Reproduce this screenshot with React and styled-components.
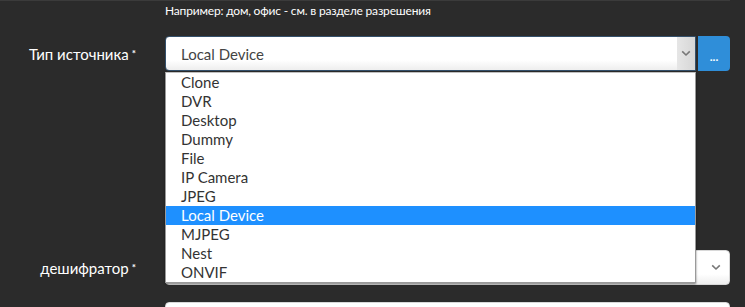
import React from "react";
import styled, { createGlobalStyle } from "styled-components";

const GlobalStyle = createGlobalStyle`
  html, body { margin: 0; padding: 0; background: #2b2b2b; }
  body { font-family: Lato, "Noto Sans", sans-serif; }
`;

const Page = styled.div`
  width: 745px;
  height: 307px;
  overflow: hidden;
  background: #2b2b2b;
  color: #f2f2f2;
`;

const TopRule = styled.div`
  width: 730px;
  border-top: 1px solid #3b3b3b;
`;

const Hint = styled.div`
  padding-left: 165px;
  height: 21px;
  line-height: 20px;
  font-size: 12px;
  font-weight: 400;
  letter-spacing: -0.18px;
  color: #ffffff;
`;

const FormRow = styled.div`
  display: flex;
  align-items: center;
  width: 730px;
  height: 35px;
  margin-top: ${(p) => p.$gap || 0}px;
`;

const Label = styled.label`
  width: 165px;
  box-sizing: border-box;
  padding-right: 29px;
  text-align: right;
  font-size: 15px;
  color: #ffffff;
  white-space: nowrap;
`;

const Star = styled.span`
  font-size: 10px;
  font-weight: 700;
  vertical-align: 3px;
  margin-left: 3px;
`;

const Field = styled.div`
  flex: 1;
  display: flex;
  position: relative;
  height: 100%;
`;

const SelectBox = styled.div`
  flex: ${(p) => (p.$width ? `0 0 ${p.$width}px` : "1")};
  box-sizing: border-box;
  display: flex;
  align-items: stretch;
  height: 100%;
  background: linear-gradient(#ffffff 70%, #eeeeee);
  border: 1px solid ${(p) => (p.$focus ? "#34506b" : "#d8d8d8")};
  border-radius: ${(p) => (p.$joined ? "4px 0 0 4px" : "4px")};
  overflow: hidden;
`;

const Value = styled.div`
  flex: 1;
  padding-left: 15px;
  display: flex;
  align-items: center;
  font-size: 15px;
  color: #444;
`;

const Arrow = styled.div`
  width: 18px;
  display: flex;
  align-items: center;
  justify-content: center;
  background: ${(p) => (p.$shaded ? "linear-gradient(90deg, #e6e6e6, #d6d6d6)" : "transparent")};
  padding-right: ${(p) => (p.$shaded ? 0 : 4)}px;
`;

const DotsButton = styled.button`
  width: 32px;
  margin-left: 2px;
  height: 100%;
  border: none;
  border-radius: 0 4px 4px 0;
  background: #2f8ed9;
  color: #fff;
  font-family: Lato, sans-serif;
  font-weight: 700;
  font-size: 12px;
  padding: 5px 0 0;
  cursor: pointer;
`;

const Dropdown = styled.ul`
  position: absolute;
  top: 36px;
  left: 0;
  width: 531px;
  box-sizing: border-box;
  margin: 0;
  padding: 0;
  list-style: none;
  background: #fff;
  border: 1px solid #9a9a9a;
  border-top-color: #c0c0c0;
  box-shadow: 0 1px 2px rgba(0, 0, 0, 0.5);
  z-index: 10;
`;

const Option = styled.li`
  height: 19px;
  line-height: 19px;
  padding-left: 15px;
  font-size: 15px;
  color: ${(p) => (p.$active ? "#fff" : "#333")};
  background: ${(p) => (p.$active ? "#1e90ff" : "transparent")};
`;

const Chevron = () => (
  <svg width="10" height="7" viewBox="0 0 10 7">
    <path d="M1.2 1.4 L5 5 L8.8 1.4" fill="none" stroke="#777" strokeWidth="1.6" />
  </svg>
);

const options = [
  "Clone",
  "DVR",
  "Desktop",
  "Dummy",
  "File",
  "IP Camera",
  "JPEG",
  "Local Device",
  "MJPEG",
  "Nest",
  "ONVIF",
];

export default function App() {
  return (
    <Page>
      <GlobalStyle />
      <TopRule />
      <Hint>Например: дом, офис - см. в разделе разрешения</Hint>
      <FormRow $gap={14}>
        <Label>
          Тип источника<Star>*</Star>
        </Label>
        <Field>
          <SelectBox $width={531} $focus $joined>
            <Value>Local Device</Value>
            <Arrow $shaded>
              <Chevron />
            </Arrow>
          </SelectBox>
          <DotsButton>...</DotsButton>
          <Dropdown>
            {options.map((o) => (
              <Option key={o} $active={o === "Local Device"}>
                {o}
              </Option>
            ))}
          </Dropdown>
        </Field>
      </FormRow>
      <FormRow $gap={179}>
        <Label>
          дешифратор<Star>*</Star>
        </Label>
        <Field>
          <SelectBox>
            <Value />
            <Arrow>
              <Chevron />
            </Arrow>
          </SelectBox>
        </Field>
      </FormRow>
      <FormRow $gap={17}>
        <Label />
        <Field>
          <SelectBox>
            <Value />
          </SelectBox>
        </Field>
      </FormRow>
    </Page>
  );
}
